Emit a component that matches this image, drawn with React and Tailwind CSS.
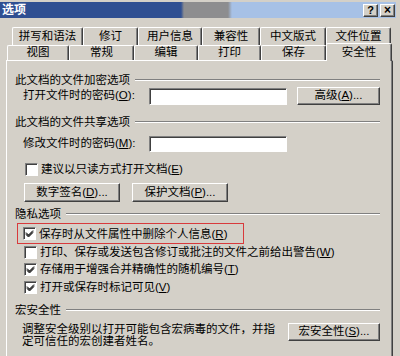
import React from "react";

const raised =
  "border border-t-white border-l-white border-r-[#404040] border-b-[#404040] shadow-[inset_-1px_-1px_#808080] bg-[#d4d0c8]";
const sunken =
  "border border-t-[#808080] border-l-[#808080] border-r-white border-b-white shadow-[inset_1px_1px_#404040]";

function Check({ checked }) {
  return (
    <span className={`w-[13px] h-[13px] bg-white shrink-0 flex items-center justify-center ${sunken}`}>
      {checked && (
        <svg width="9" height="9" viewBox="0 0 9 9">
          <path d="M1 3.5 L3.5 6 L8 1.5 M1 4.5 L3.5 7 L8 2.5 M1 5.5 L3.5 8 L8 3.5" stroke="#000" strokeWidth="1" fill="none" />
        </svg>
      )}
    </span>
  );
}

function Group({ title, className }) {
  return (
    <div className={`flex items-center h-[14px] pl-[8px] pr-[12px] ${className}`}>
      <span className="leading-[14px] whitespace-nowrap">{title}</span>
      <div className="flex-1 ml-[5px] h-[2px] border-t border-t-[#808080] border-b border-b-white" />
    </div>
  );
}

function Btn({ children, className }) {
  return (
    <div className={`flex items-center justify-center leading-none whitespace-nowrap ${raised} ${className}`}>
      {children}
    </div>
  );
}

function Opt({ checked, children, className }) {
  return (
    <div className={`flex items-center gap-[3px] h-[14px] ${className}`}>
      <Check checked={checked} />
      <span className="leading-[14px] whitespace-nowrap">{children}</span>
    </div>
  );
}

const row1 = [
  ["拼写和语法", "w-[71px]"],
  ["修订", "w-[55px]"],
  ["用户信息", "w-[64px]"],
  ["兼容性", "w-[58px]"],
  ["中文版式", "w-[66px]"],
  ["文件位置", "w-[65px]"],
];
const row2 = [
  ["视图", "w-[62px]"],
  ["常规", "w-[65px]"],
  ["编辑", "w-[64px]"],
  ["打印", "w-[63px]"],
  ["保存", "w-[65px]"],
];

export default function App() {
  return (
    <div className="w-[400px] h-[356px] overflow-hidden bg-[#d4d0c8] text-black text-[11.5px] font-['Liberation_Sans','Noto_Sans_CJK_SC',sans-serif]">
      {/* title bar */}
      <div className="pt-[2px] pr-[4px]">
        <div className="h-[16px] flex items-center bg-[linear-gradient(to_right,#2f4f92_0px,#2f4f92_181px,#8d8d8f_184px,#8d8d8f_228px,#a7c1e6_232px)]">
          <span className="pl-[2px] text-white font-bold text-[12px] leading-none">选项</span>
          <div className="ml-auto flex gap-[2px] mr-[1px]">
            <Btn className="w-[15px] h-[13px] font-bold text-[11px]">?</Btn>
            <Btn className="w-[15px] h-[13px] font-bold text-[12px]">×</Btn>
          </div>
        </div>
      </div>

      {/* tabs */}
      <div className="mt-[9px] flex pl-[12px] h-[18px]">
        {row1.map(([t, w]) => (
          <div
            key={t}
            className={`${w} h-[18px] flex items-center justify-center border-t border-l border-t-white border-l-white border-r border-r-[#404040] shadow-[inset_-1px_0_#808080] rounded-t-[2px]`}
          >
            {t}
          </div>
        ))}
      </div>
      <div className="flex pl-[7px] h-[15px] items-end">
        {row2.map(([t, w]) => (
          <div
            key={t}
            className={`${w} h-[15px] flex items-center justify-center border-t border-l border-t-white border-l-white border-r border-r-[#404040] shadow-[inset_-1px_0_#808080] rounded-t-[2px]`}
          >
            {t}
          </div>
        ))}
        <div className="w-[66px] h-[18px] -mb-[1px] relative z-10 bg-[#d4d0c8] flex items-center justify-center border-t border-l border-t-white border-l-white border-r border-r-[#404040] shadow-[inset_-1px_0_#808080] rounded-t-[2px]">
          安全性
        </div>
      </div>

      {/* panel */}
      <div className="ml-[6px] w-[387px] h-[320px] border-t border-l border-t-white border-l-white border-r border-r-[#404040] shadow-[inset_-1px_0_#808080] flex flex-col">
        <Group title="此文档的文件加密选项" className="mt-[12px]" />
        <div className="flex items-center h-[18px] pl-[16px]">
          <span className="w-[126px] whitespace-nowrap">
            打开文件时的密码(<u>O</u>):
          </span>
          <div className={`w-[138px] h-[17px] bg-white ${sunken}`} />
          <Btn className="ml-[10px] w-[83px] h-[18px]">
            高级(<u>A</u>)...
          </Btn>
        </div>

        <Group title="此文档的文件共享选项" className="mt-[10px]" />
        <div className="flex items-center h-[17px] pl-[16px] mt-[6px]">
          <span className="w-[126px] whitespace-nowrap">
            修改文件时的密码(<u>M</u>):
          </span>
          <div className={`w-[138px] h-[16px] bg-white ${sunken}`} />
        </div>

        <Opt className="mt-[10px] pl-[18px]">
          建议以只读方式打开文档(<u>E</u>)
        </Opt>

        <div className="flex gap-[12px] pl-[17px] mt-[7px]">
          <Btn className="w-[96px] h-[19px]">
            数字签名(<u>D</u>)...
          </Btn>
          <Btn className="w-[96px] h-[19px]">
            保护文档(<u>P</u>)...
          </Btn>
        </div>

        <Group title="隐私选项" className="mt-[5px]" />

        <div className="mt-[2px] ml-[10px] w-[227px] h-[21px] border-[1.5px] border-[#d83a3c] flex items-center pl-[5px]">
          <Opt checked>
            保存时从文件属性中删除个人信息(<u>R</u>)
          </Opt>
        </div>
        <Opt className="mt-[1px] pl-[17px]">
          打印、保存或发送包含修订或批注的文件之前给出警告(<u>W</u>)
        </Opt>
        <Opt checked className="mt-[3px] pl-[17px]">
          存储用于增强合并精确性的随机编号(<u>T</u>)
        </Opt>
        <Opt checked className="mt-[4px] pl-[17px]">
          打开或保存时标记可见(<u>V</u>)
        </Opt>

        <Group title="宏安全性" className="mt-[9px]" />
        <div className="flex items-start mt-[6px] pl-[15px]">
          <p className="w-[266px] leading-[12px] whitespace-nowrap">
            调整安全级别以打开可能包含宏病毒的文件，并指
            <br />
            定可信任的宏创建者姓名。
          </p>
          <Btn className="w-[92px] h-[18px]">
            宏安全性(<u>S</u>)...
          </Btn>
        </div>
      </div>
    </div>
  );
}
